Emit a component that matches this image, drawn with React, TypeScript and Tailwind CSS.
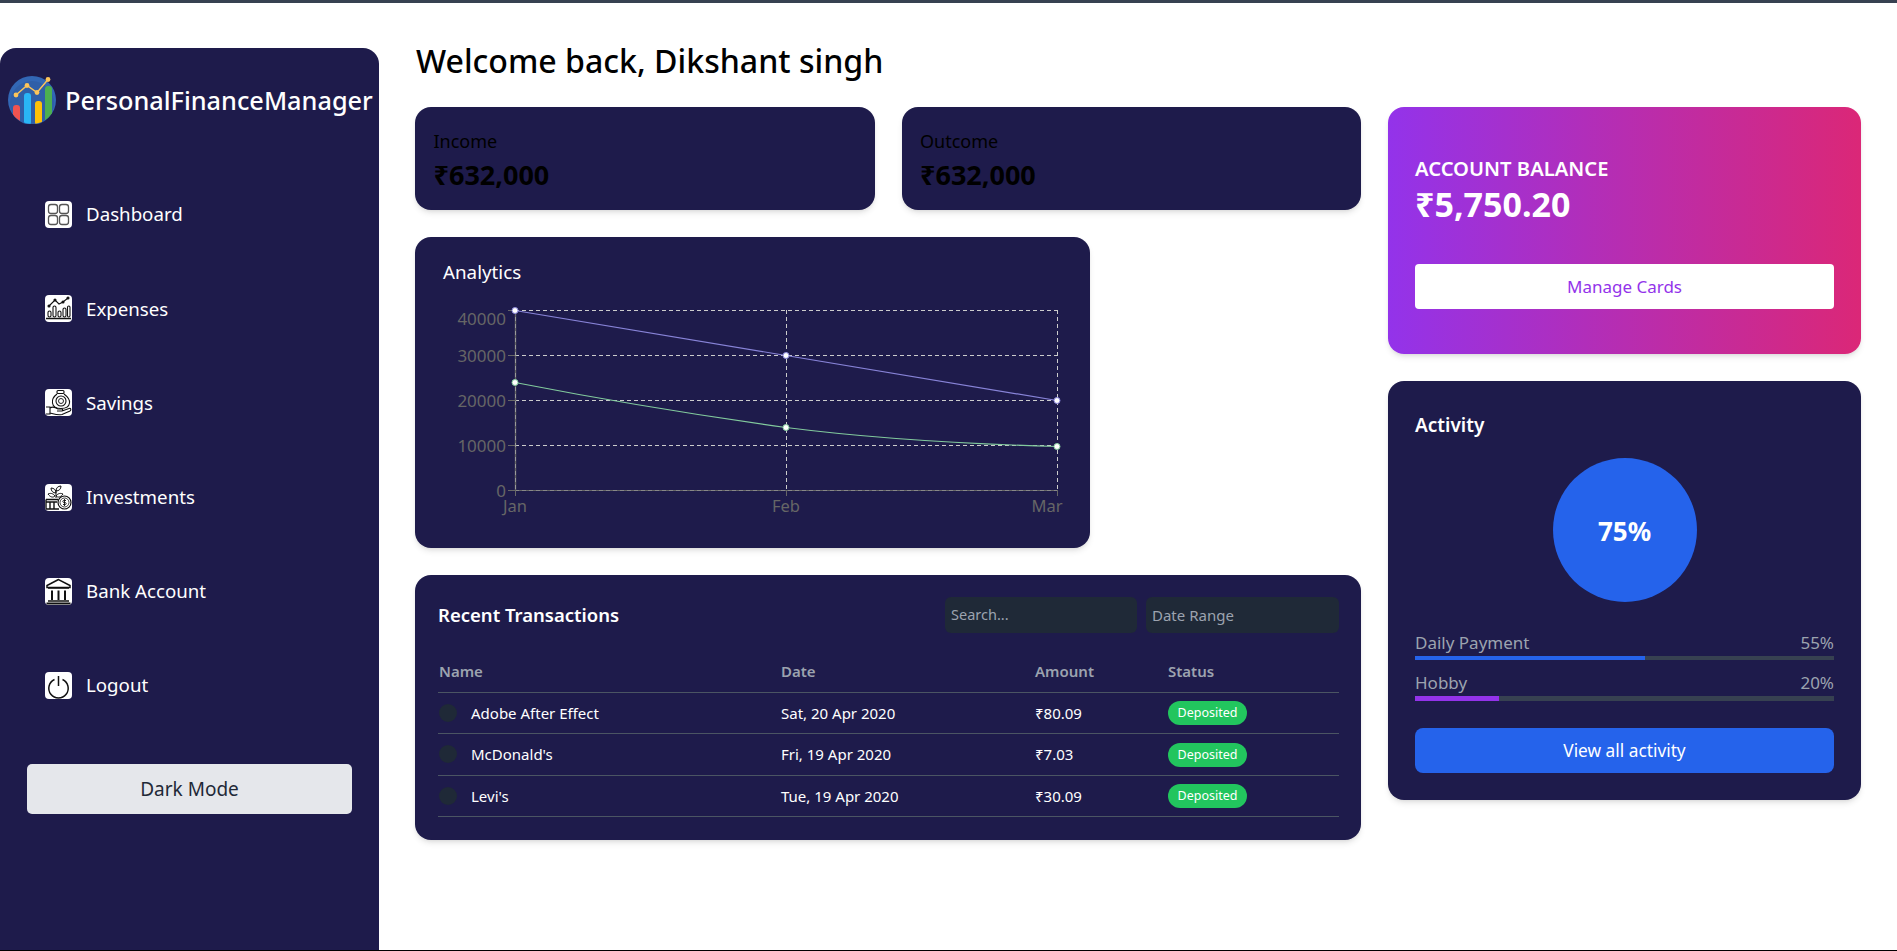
import React from 'react';

const font = { fontFamily: '"Noto Sans", "Open Sans", sans-serif' };

const DashIcon = () => (
  <svg viewBox="0 0 27 27" className="w-full h-full" fill="none" stroke="#555" strokeWidth="1.3">
    <rect x="3.5" y="3.5" width="9" height="9" rx="2.5" />
    <rect x="14.5" y="3.5" width="9" height="9" rx="2.5" />
    <rect x="3.5" y="14.5" width="9" height="9" rx="2.5" />
    <rect x="14.5" y="14.5" width="9" height="9" rx="2.5" />
  </svg>
);

const ExpenseIcon = () => (
  <svg viewBox="0 0 27 27" className="w-full h-full" fill="none" stroke="#111" strokeWidth="1.1">
    <path d="M4 11 L10 5 L14 9 L18 7 L23 3" />
    <circle cx="4" cy="11" r="1" fill="#111" />
    <circle cx="10" cy="5" r="1" fill="#111" />
    <circle cx="18" cy="7" r="1" fill="#111" />
    <circle cx="23" cy="3" r="1" fill="#111" />
    <rect x="3" y="16" width="3" height="6" rx="1.5" />
    <rect x="8" y="11" width="3" height="11" rx="1.5" />
    <rect x="13" y="16" width="3" height="6" rx="1.5" />
    <rect x="18" y="13" width="3" height="9" rx="1.5" />
    <rect x="22.5" y="11" width="2.5" height="11" rx="1.2" />
    <path d="M1 23.5 H26" strokeWidth="1.6" />
  </svg>
);

const SavingsIcon = () => (
  <svg viewBox="0 0 27 27" className="w-full h-full" fill="none" stroke="#111" strokeWidth="1.1">
    <rect x="12" y="1.5" width="7" height="3" rx="1" />
    <path d="M12 5 C8 8 7 11 7.5 14 C8 18 11 19.5 16 19.5 C21 19.5 24 18 24.5 14 C25 11 23 8 19 5" />
    <circle cx="16" cy="12" r="5" />
    <circle cx="16" cy="12" r="2.5" strokeWidth="0.9" />
    <path d="M1 18 H5 V25 H1 M5 19 C8 17 10 18 13 20 H17 C18 20 18 22 17 22 H12 M17 22 L24 19.5 C26 19 26.5 21 25 22 L17 25.5 C13 26.5 9 25 5 24" />
  </svg>
);

const InvestIcon = () => (
  <svg viewBox="0 0 27 27" className="w-full h-full" fill="none" stroke="#111" strokeWidth="1">
    <path d="M11 14 V6 M11 9 C8 9 6 7 6 4 C9 4 11 6 11 9 Z M11 7 C11 4 13 2 16 2 C16 5 14 7 11 7 Z M11 12 C13 9 16 9 18 10 C16 13 13 14 11 12 Z M10 12 C8 9 5 9 3 10 C5 13 8 14 10 12 Z" />
    <circle cx="19.5" cy="18.5" r="6.5" strokeWidth="1.2" />
    <circle cx="19.5" cy="18.5" r="4.5" strokeWidth="0.8" />
    <path d="M21 16.5 H18.5 C17.5 16.5 17.5 18.5 19 18.5 H20 C21.5 18.5 21.5 20.5 20.5 20.5 H18 M19.5 15 V22" strokeWidth="0.9" />
    <path d="M1 15.5 H13 M1 18 H12 M1 15.5 V25 H14 M5 18 V25 M9 18 V25" strokeWidth="1.4" />
  </svg>
);

const BankIcon = () => (
  <svg viewBox="0 0 27 27" className="w-full h-full" fill="none" stroke="#111" strokeWidth="1.5">
    <path d="M13.5 1.5 L2 7.5 V9.5 H25 V7.5 Z" />
    <path d="M3 10 H24" strokeWidth="1.5" />
    <path d="M7 12.5 V22 M13.5 12.5 V22 M20 12.5 V22" strokeWidth="2" />
    <path d="M3 23 H24" />
    <path d="M1.5 25.5 H25.5" strokeWidth="2" />
  </svg>
);

const PowerIcon = () => (
  <svg viewBox="0 0 27 27" className="w-full h-full" fill="none" stroke="#111" strokeWidth="1.5">
    <path d="M9.5 7.5 A9.7 9.7 0 1 0 17.5 7.5" />
    <path d="M13.5 4 V14" />
  </svg>
);

const Logo = () => (
  <svg viewBox="0 0 48 48" className="w-12 h-12 shrink-0">
    <defs>
      <clipPath id="logo-clip">
        <circle cx="24" cy="24" r="24" />
      </clipPath>
    </defs>
    <circle cx="24" cy="24" r="24" fill="#3267b5" />
    <circle cx="24" cy="27" r="22" fill="#2f5fa8" />
    <g clipPath="url(#logo-clip)">
      <rect x="5" y="29" width="7" height="20" rx="3" fill="#ef5350" />
      <rect x="16" y="17" width="7" height="32" rx="3" fill="#29b6f6" />
      <rect x="27" y="25" width="7" height="24" rx="3" fill="#ffc107" />
      <rect x="37" y="10" width="7" height="39" rx="3" fill="#4caf50" />
    </g>
    <path d="M8 19 L19 9.5 L29 16.5 L40 3.5" fill="none" stroke="#fdc55a" strokeWidth="1.4" />
    <circle cx="8" cy="19" r="2.4" fill="#fdc55a" />
    <circle cx="19" cy="9.5" r="2.4" fill="#fdc55a" />
    <circle cx="29" cy="16.5" r="2.4" fill="#fdc55a" />
    <circle cx="40" cy="3.5" r="2.4" fill="#fdc55a" />
  </svg>
);

const navItems = [
  { label: 'Dashboard', icon: <DashIcon /> },
  { label: 'Expenses', icon: <ExpenseIcon /> },
  { label: 'Savings', icon: <SavingsIcon /> },
  { label: 'Investments', icon: <InvestIcon /> },
  { label: 'Bank Account', icon: <BankIcon /> },
  { label: 'Logout', icon: <PowerIcon /> },
];

const transactions = [
  { name: 'Adobe After Effect', date: 'Sat, 20 Apr 2020', amount: '₹80.09' },
  { name: "McDonald's", date: 'Fri, 19 Apr 2020', amount: '₹7.03' },
  { name: "Levi's", date: 'Tue, 19 Apr 2020', amount: '₹30.09' },
];

const xs = [515, 786, 1057];
const ys = [490.5, 445.5, 400.5, 355.5, 310.5];

const Chart = () => {
  const ox = 415;
  const oy = 237;
  return (
    <svg viewBox={`${ox} ${oy} 675 311`} className="absolute inset-0 w-full h-full" style={font}>
      {ys.slice(1).map((y) => (
        <line key={y} x1={515} x2={1057} y1={y} y2={y} stroke="#ccc" strokeDasharray="4 3" strokeWidth="1" />
      ))}
      {xs.slice(1).map((x) => (
        <line key={x} x1={x + 0.5} x2={x + 0.5} y1={310} y2={490} stroke="#ccc" strokeDasharray="4 3" strokeWidth="1" />
      ))}
      <line x1={515.5} x2={515.5} y1={310} y2={490} stroke="#666" strokeWidth="1.4" />
      <line x1={515.5} x2={515.5} y1={310} y2={490} stroke="#999" strokeDasharray="4 3" strokeWidth="1" />
      <line x1={515} x2={1057} y1={490.5} y2={490.5} stroke="#666" strokeWidth="1.2" />
      <line x1={515} x2={1057} y1={490.5} y2={490.5} stroke="#888" strokeDasharray="4 3" strokeWidth="1" />
      {xs.map((x) => (
        <line key={x} x1={x + 0.5} x2={x + 0.5} y1={490} y2={496} stroke="#666" />
      ))}
      {ys.map((y) => (
        <line key={y} x1={508} x2={515} y1={y} y2={y} stroke="#666" />
      ))}
      <path d="M515 310.5 L786 355.5 L1057 400.5" fill="none" stroke="#8884d8" strokeWidth="1.2" />
      <path d="M515 382.5 C605 400 696 415 786 427.5 C876 439 967 444 1057 446.5" fill="none" stroke="#82ca9d" strokeWidth="1.2" />
      {[[515, 310.5], [786, 355.5], [1057, 400.5]].map(([x, y]) => (
        <circle key={x} cx={x} cy={y} r="3" fill="#fff" stroke="#8884d8" />
      ))}
      {[[515, 382.5], [786, 427.5], [1057, 446.5]].map(([x, y]) => (
        <circle key={x} cx={x} cy={y} r="3" fill="#fff" stroke="#82ca9d" />
      ))}
      <g fill="#666" fontSize="17" textAnchor="end">
        <text x="506" y="324.5">40000</text>
        <text x="506" y="362">30000</text>
        <text x="506" y="406.5">20000</text>
        <text x="506" y="451.5">10000</text>
        <text x="506" y="496.5">0</text>
      </g>
      <g fill="#666" fontSize="16.5" textAnchor="middle">
        <text x="515" y="511.5">Jan</text>
        <text x="786" y="511.5">Feb</text>
        <text x="1047" y="511.5">Mar</text>
      </g>
    </svg>
  );
};

export default function App() {
  return (
    <div className="w-[1897px] h-[951px] overflow-hidden bg-white flex flex-col" style={font}>
      <div className="h-[3px] bg-[#374151] shrink-0" />
      <div className="flex flex-1 min-h-0">
        <aside className="w-[379px] mt-[45px] bg-[#1e1b4b] rounded-t-2xl shrink-0 flex flex-col">
          <div className="flex items-center gap-[9px] pl-2 pt-7 text-white">
            <Logo />
            <span className="text-[25.3px] font-medium relative top-[1px] whitespace-nowrap">PersonalFinanceManager</span>
          </div>
          <nav className="flex flex-col mt-[77px] gap-[67.2px] pl-[45px]">
            {navItems.map((item) => (
              <div key={item.label} className="flex items-center gap-[14px] h-[27px] text-white text-[18.7px]">
                <span className="w-[27px] h-[27px] bg-white rounded-[4px] overflow-hidden shrink-0">{item.icon}</span>
                {item.label}
              </div>
            ))}
          </nav>
          <button className="mt-[65px] ml-[27px] w-[325px] h-[50px] bg-[#e5e7eb] rounded-[5px] text-[#1f2937] text-[19px]">
            Dark Mode
          </button>
        </aside>

        <main className="flex-1 min-w-0 pl-9 pt-[34px]">
          <h1 className="ml-px text-[32.1px] leading-[48px] font-medium text-black">Welcome back, Dikshant singh</h1>
          <div className="flex gap-[27px] mt-[22px]">
            <div className="w-[946px] flex flex-col gap-[27px]">
              <div className="flex gap-[27px]">
                {['Income', 'Outcome'].map((label) => (
                  <div key={label} className="flex-1 h-[103px] bg-[#1e1b4b] rounded-2xl shadow-md pl-[18.5px] pt-[22px] text-black">
                    <div className="text-[18px] leading-[24px]">{label}</div>
                    <div className="text-[27px] leading-[36px] font-bold mt-1">₹632,000</div>
                  </div>
                ))}
              </div>

              <section className="relative w-[675px] h-[311px] bg-[#1e1b4b] rounded-2xl shadow-md">
                <h2 className="absolute left-7 top-[21px] text-[18.8px] leading-7 text-white">Analytics</h2>
                <Chart />
              </section>

              <section className="h-[265px] bg-[#1e1b4b] rounded-2xl shadow-md pl-[23px] pr-[22px] pt-[22px]">
                <div className="flex items-center justify-between">
                  <h2 className="text-[18.5px] font-semibold text-white">Recent Transactions</h2>
                  <div className="flex gap-[9px]">
                    <div className="w-[192px] h-9 bg-[#1f2937] rounded-md flex items-center px-[6px] text-[14.5px] text-[#9ca3af]">Search...</div>
                    <div className="w-[193px] h-9 bg-[#1f2937] rounded-md flex items-center px-[6px] text-[15px] text-[#9ca3af]">Date Range</div>
                  </div>
                </div>
                <table className="w-full mt-[15px] text-[15px] text-white">
                  <thead>
                    <tr className="border-b border-[#4b5563] text-[#9ca3af] text-left h-[44px]">
                      <th className="w-[343px] pl-px pt-[3px] font-semibold">Name</th>
                      <th className="w-[254px] pt-[3px] font-semibold">Date</th>
                      <th className="w-[133px] pt-[3px] font-semibold">Amount</th>
                      <th className="pt-[3px] font-semibold">Status</th>
                    </tr>
                  </thead>
                  <tbody>
                    {transactions.map((t) => (
                      <tr key={t.name} className="border-b border-[#4b5563] h-[41.5px]">
                        <td>
                          <div className="flex items-center gap-[14px] pl-px">
                            <span className="w-[18px] h-[18px] rounded-full bg-[#1f2937]" />
                            {t.name}
                          </div>
                        </td>
                        <td>{t.date}</td>
                        <td>{t.amount}</td>
                        <td>
                          <span className="inline-flex items-center justify-center w-[79px] h-6 rounded-full bg-[#22c55e] text-[12.5px] text-white">Deposited</span>
                        </td>
                      </tr>
                    ))}
                  </tbody>
                </table>
              </section>
            </div>

            <div className="w-[473px] flex flex-col gap-[27px]">
              <section className="h-[247px] rounded-2xl shadow-md bg-[linear-gradient(to_right,#9333ea,#db2777)] px-[27px] pt-[47px]">
                <div className="text-[20.2px] leading-7 font-semibold text-white">ACCOUNT BALANCE</div>
                <div className="text-[34px] leading-[40px] font-bold text-white mt-[2px]">₹5,750.20</div>
                <button className="w-full h-[45px] mt-[40px] bg-white rounded-[4px] text-[#9333ea] text-[17px]">Manage Cards</button>
              </section>

              <section className="h-[419px] rounded-2xl shadow-md bg-[#1e1b4b] px-[27px] pt-[30px]">
                <h2 className="text-[19px] leading-7 font-semibold text-white">Activity</h2>
                <div className="w-36 h-36 rounded-full bg-[#2563eb] mx-auto mt-[19px] flex items-center justify-center text-white text-[26px] font-bold pt-[2px]">75%</div>
                <div className="mt-[28px] text-[#9ca3af] text-[17px]">
                  <div className="flex justify-between leading-[26px]">
                    <span>Daily Payment</span>
                    <span>55%</span>
                  </div>
                  <div className="h-1 bg-[#374151]">
                    <div className="h-full bg-[#2563eb] w-[55%]" />
                  </div>
                  <div className="flex justify-between leading-[26px] mt-[10px]">
                    <span>Hobby</span>
                    <span>20%</span>
                  </div>
                  <div className="h-[5px] bg-[#374151]">
                    <div className="h-full bg-[#9333ea] w-[20%]" />
                  </div>
                </div>
                <button className="w-full h-[45px] mt-[27px] bg-[#2563eb] rounded-lg text-white text-[17.3px]">View all activity</button>
              </section>
            </div>
          </div>
        </main>
      </div>
      <div className="h-px bg-black shrink-0" />
    </div>
  );
}
